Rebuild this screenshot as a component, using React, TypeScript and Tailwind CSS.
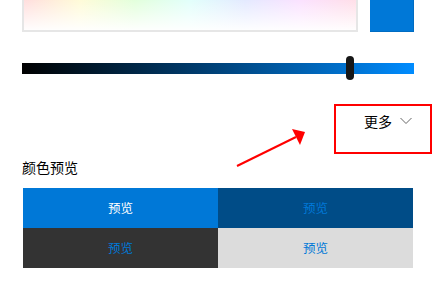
import React from "react";

const cells = [
  { bg: "bg-[#0078d7]", fg: "text-white" },
  { bg: "bg-[#004c87]", fg: "text-[#0078d7]" },
  { bg: "bg-[#333333]", fg: "text-[#0078d7]" },
  { bg: "bg-[#dcdcdc]", fg: "text-[#0078d7]" },
];

export default function App() {
  return (
    <div
      className="relative w-[446px] h-[286px] bg-white overflow-hidden"
      style={{ fontFamily: '"Noto Sans CJK SC", "Noto Sans", sans-serif' }}
    >
      {/* spectrum + current colour */}
      <div className="flex pl-[22px]">
        <div className="relative w-[336px] h-8 border-x-2 border-b-2 border-[#e6e6e6] bg-[linear-gradient(90deg,#ffdede,#fffbd8,#e3ffdc,#e2fffb,#e4eaff,#fbe2ff,#ffdfe8)]">
          <div className="absolute inset-0 bg-[linear-gradient(180deg,rgba(255,255,255,0),rgba(255,255,255,0.95))]" />
        </div>
        <div className="ml-[12px] w-[44px] h-8 bg-[#0078d7] border-r border-b border-[#006cc2]" />
      </div>

      {/* value slider */}
      <div className="relative mt-[31px] mx-[22px] w-[392px] h-[11px] bg-[linear-gradient(90deg,#000000,#003c6e_45%,#0070cc_82%,#008cff)]">
        <div className="absolute left-[324px] top-[-7px] w-2 h-6 rounded-full bg-[#171717]" />
      </div>

      {/* more */}
      <div className="mt-[30px] ml-[334px] w-[98px] h-[50px] border-2 border-[#ff0000] pl-[28px] pt-[5px]">
        <div className="flex items-center text-[14px] leading-5 text-black">
          <span>更多</span>
          <svg className="ml-[8px]" width="12" height="8" viewBox="0 0 12 8">
            <path d="M0.5 1 L6 6.5 L11.5 1" fill="none" stroke="#666" strokeWidth="1" />
          </svg>
        </div>
      </div>

      <div className="mt-[3px] ml-[22px] text-[14px] leading-5 text-black">颜色预览</div>

      <div className="mt-[11px] ml-[23px] w-[390px] grid grid-cols-2">
        {cells.map((c, i) => (
          <div key={i} className={`h-10 flex items-center justify-center text-[12.5px] ${c.bg} ${c.fg}`}>
            预览
          </div>
        ))}
      </div>

      {/* annotation arrow */}
      <svg className="absolute left-0 top-0" width="446" height="286">
        <line x1="237" y1="166" x2="296" y2="137" stroke="#ff0000" strokeWidth="2" />
        <polygon points="305,132 292,129 300,145" fill="#ff0000" />
      </svg>
    </div>
  );
}
